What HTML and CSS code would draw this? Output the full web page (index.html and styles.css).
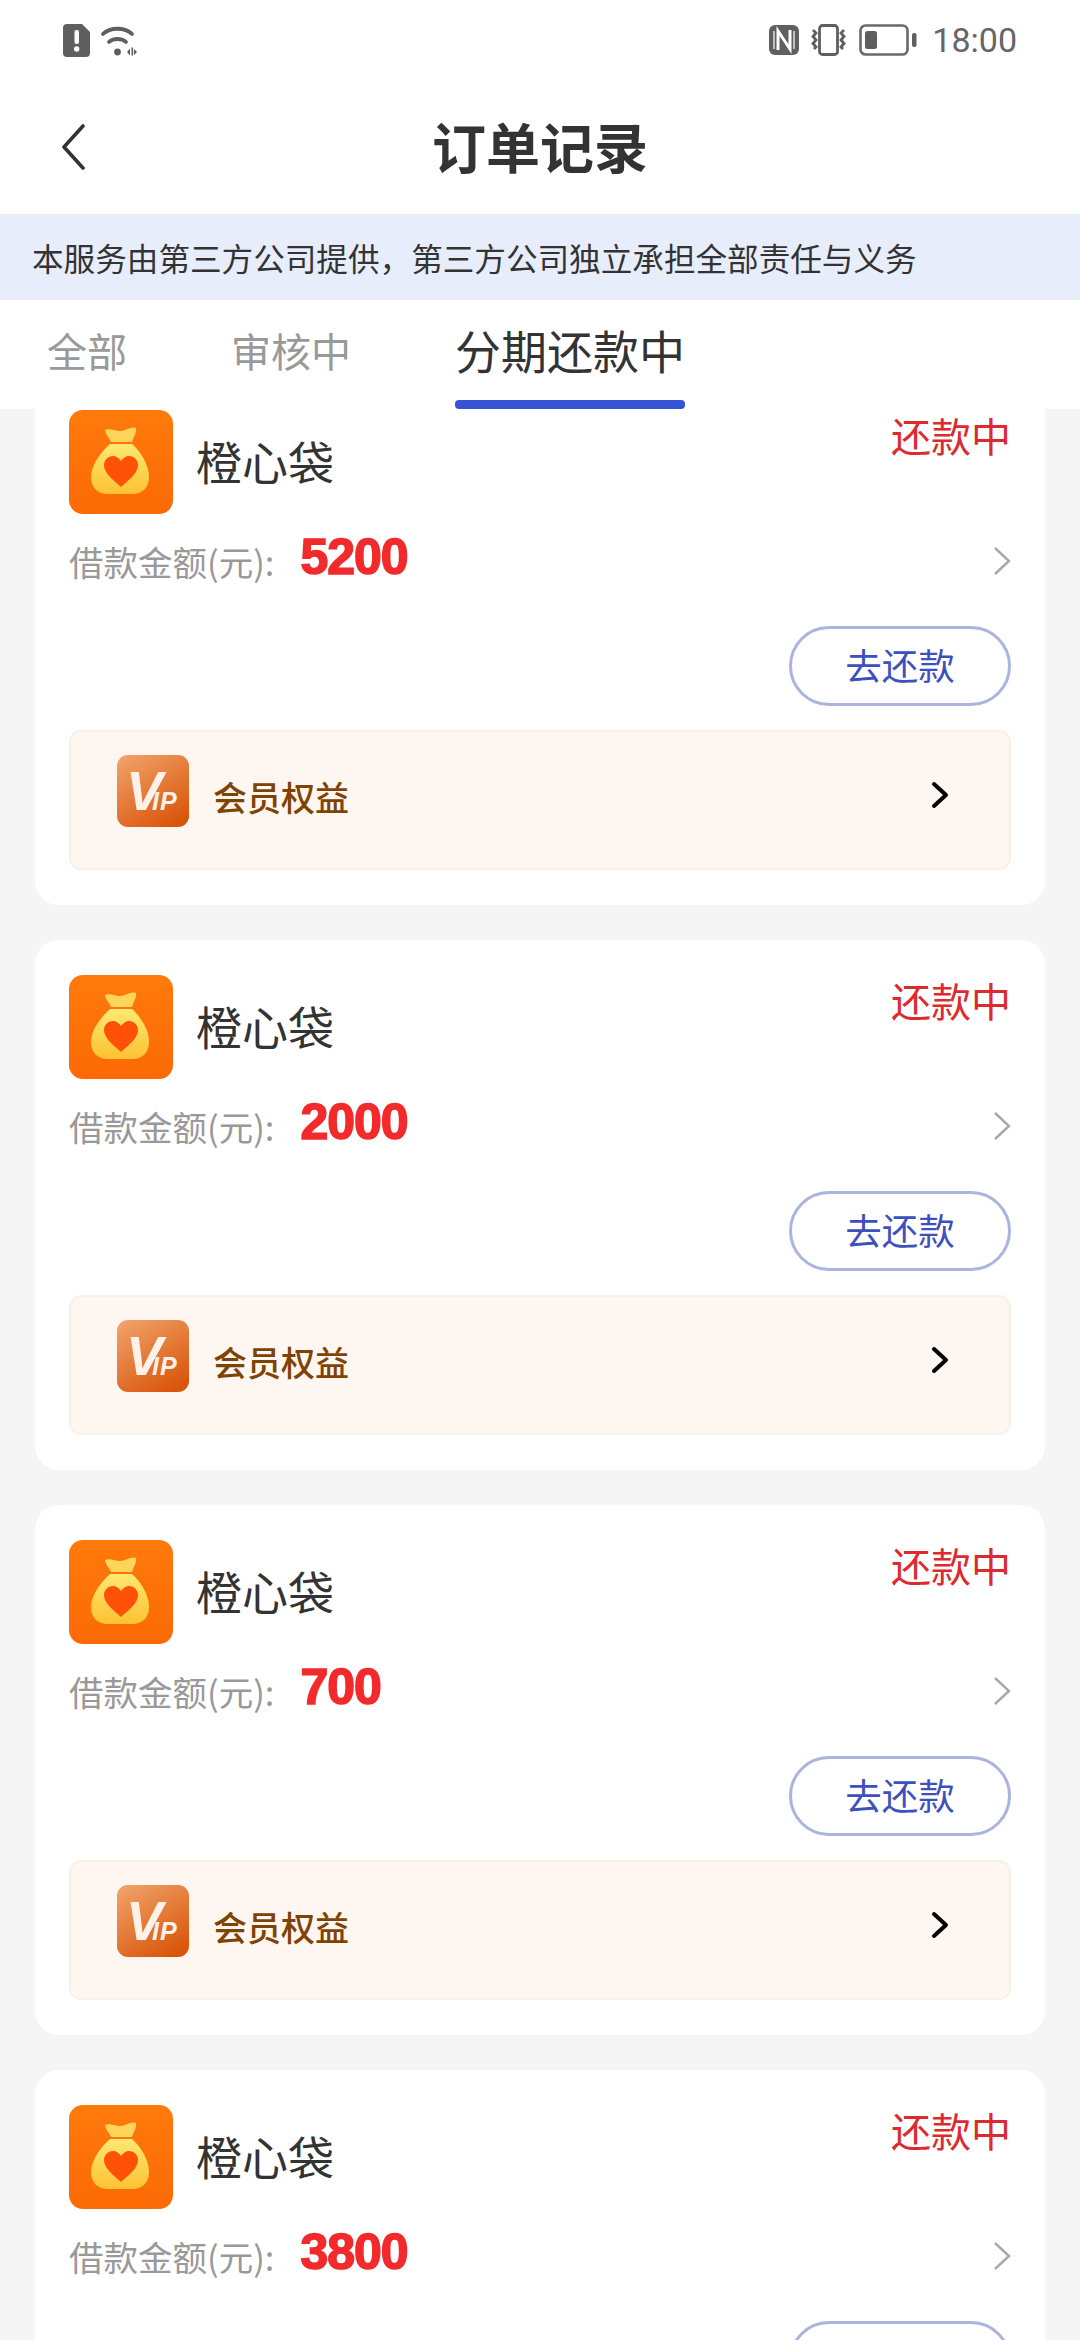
FILE: index.html
```html
<!DOCTYPE html>
<html lang="zh-CN">
<head>
<meta charset="utf-8">
<title>订单记录</title>
<link rel="stylesheet" href="styles.css">
</head>
<body>
<svg class="sprite" width="0" height="0" aria-hidden="true">
  <defs>
    <linearGradient id="bagBg" x1="0" y1="0" x2="0" y2="1"><stop offset="0" stop-color="#ff7a0b"/><stop offset="1" stop-color="#fc6a06"/></linearGradient>
    <linearGradient id="bagBody" x1="0" y1="0" x2="0" y2="1"><stop offset="0" stop-color="#ffe872"/><stop offset="1" stop-color="#fdc232"/></linearGradient>
    <linearGradient id="vipBg" x1="0.15" y1="0" x2="0.75" y2="1"><stop offset="0" stop-color="#f0a067"/><stop offset="1" stop-color="#d9550a"/></linearGradient>
    <symbol id="bag" viewBox="0 0 104 104">
      <rect width="104" height="104" rx="14" fill="url(#bagBg)"/>
      <path d="M36 20c5-2 9 1 15 1 6 0 11-5 16-3 1 4-2 8-4 14H42c-2-5-6-8-6-12z" fill="#fdd659"/>
      <path d="M41 34h22c9 8 17 21 17 33 0 11-7 17-17 17H39c-10 0-17-6-17-17 0-12 10-25 19-33z" fill="url(#bagBody)"/>
      <path d="M52 77C44 70 35 63 35 55c0-5 4-9 9-9 3 0 6 2 8 5 2-3 5-5 8-5 5 0 9 4 9 9 0 8-9 15-17 22z" fill="#ff5208"/>
    </symbol>
    <symbol id="vip" viewBox="0 0 72 72">
      <rect width="72" height="72" rx="11" fill="url(#vipBg)"/>
      <text class="vip-v" x="9" y="55">V</text>
      <text class="vip-ip" x="35" y="55">IP</text>
    </symbol>
  </defs>
</svg>
<div class="screen">
  <header class="top">
    <div class="status">
      <div class="status-group">
        <svg class="ico-alert" viewBox="0 0 27 33"><path d="M4 0h15l8 8v21a4 4 0 0 1-4 4H4a4 4 0 0 1-4-4V4a4 4 0 0 1 4-4z" fill="#5f5f5f"/><rect x="11.500" y="6" width="4.500" height="14" rx="2" fill="#fff"/><circle cx="13.700" cy="25" r="2.700" fill="#fff"/></svg>
        <svg class="ico-wifi" viewBox="0 0 37 31"><g fill="none" stroke="#5f5f5f" stroke-width="3.800" stroke-linecap="round"><path d="M3 9C10 2 25 2 32 9"/><path d="M9 17c4-4 13-4 17 0"/></g><circle cx="17.500" cy="27" r="3.400" fill="#5f5f5f"/><path d="M27 27l3-3.500v7zM31.500 22.500h1.600v8h-1.600zM34 24l3 3-3 3z" fill="#5f5f5f"/></svg>
      </div>
      <div class="status-group status-right">
        <svg class="ico-nfc" viewBox="0 0 30 30"><rect width="30" height="30" rx="6" fill="#5f5f5f"/><path d="M9 25V6l12 18V5" fill="none" stroke="#fff" stroke-width="3"/><path d="M5 6v18M25 6v18" stroke="#fff" stroke-width="1.200"/></svg>
        <svg class="ico-vib" viewBox="0 0 41 32"><rect x="11.500" y="1.500" width="18" height="29" rx="3" fill="none" stroke="#5f5f5f" stroke-width="2.800"/><g fill="none" stroke="#5f5f5f" stroke-width="2.800"><path d="M5 6l3 3-3 3.500 3 3.500-3 3.500 3 3.500-2 2"/><path d="M36 6l-3 3 3 3.500-3 3.500 3 3.500-3 3.500 2 2"/></g></svg>
        <svg class="ico-bat" viewBox="0 0 58 32"><rect x="1.500" y="1.500" width="47" height="29" rx="5" fill="none" stroke="#6a6a6a" stroke-width="2.600"/><rect x="6" y="7" width="12" height="18" rx="2.500" fill="#5f5f5f"/><rect x="53" y="9" width="4.500" height="14" rx="2" fill="#5f5f5f"/></svg>
        <span class="clock">18:00</span>
      </div>
    </div>
    <nav class="nav">
      <svg class="ico-back" viewBox="0 0 24 46"><path d="M22 2L3 23l19 21" fill="none" stroke="#333" stroke-width="3.600" stroke-linecap="round" stroke-linejoin="round"/></svg>
      <h1 class="title">订单记录</h1>
    </nav>
  </header>
  <div class="notice">本服务由第三方公司提供，第三方公司独立承担全部责任与义务</div>
  <div class="tabs">
    <span class="tab">全部</span>
    <span class="tab">审核中</span>
    <span class="tab tab-active">分期还款中</span>
  </div>
  <main class="list">
    <article class="card">
      <div class="card-head">
        <svg class="bag"><use href="#bag"/></svg>
        <span class="name">橙心袋</span>
        <span class="state">还款中</span>
      </div>
      <div class="amount-row">
        <span class="label">借款金额(元):</span>
        <span class="amount">5200</span>
        <svg class="chev-grey" viewBox="0 0 18 30"><path d="M2 2l14 13L2 28" fill="none" stroke="#a8a8a8" stroke-width="2.400"/></svg>
      </div>
      <div class="actions"><span class="pay">去还款</span></div>
      <div class="member">
        <svg class="vip"><use href="#vip"/></svg>
        <span class="member-text">会员权益</span>
        <svg class="chev-black" viewBox="0 0 18 28"><path d="M3 3l12 11L3 25" fill="none" stroke="#000" stroke-width="4" stroke-linecap="round" stroke-linejoin="round"/></svg>
      </div>
    </article>
    <article class="card">
      <div class="card-head">
        <svg class="bag"><use href="#bag"/></svg>
        <span class="name">橙心袋</span>
        <span class="state">还款中</span>
      </div>
      <div class="amount-row">
        <span class="label">借款金额(元):</span>
        <span class="amount">2000</span>
        <svg class="chev-grey" viewBox="0 0 18 30"><path d="M2 2l14 13L2 28" fill="none" stroke="#a8a8a8" stroke-width="2.400"/></svg>
      </div>
      <div class="actions"><span class="pay">去还款</span></div>
      <div class="member">
        <svg class="vip"><use href="#vip"/></svg>
        <span class="member-text">会员权益</span>
        <svg class="chev-black" viewBox="0 0 18 28"><path d="M3 3l12 11L3 25" fill="none" stroke="#000" stroke-width="4" stroke-linecap="round" stroke-linejoin="round"/></svg>
      </div>
    </article>
    <article class="card">
      <div class="card-head">
        <svg class="bag"><use href="#bag"/></svg>
        <span class="name">橙心袋</span>
        <span class="state">还款中</span>
      </div>
      <div class="amount-row">
        <span class="label">借款金额(元):</span>
        <span class="amount">700</span>
        <svg class="chev-grey" viewBox="0 0 18 30"><path d="M2 2l14 13L2 28" fill="none" stroke="#a8a8a8" stroke-width="2.400"/></svg>
      </div>
      <div class="actions"><span class="pay">去还款</span></div>
      <div class="member">
        <svg class="vip"><use href="#vip"/></svg>
        <span class="member-text">会员权益</span>
        <svg class="chev-black" viewBox="0 0 18 28"><path d="M3 3l12 11L3 25" fill="none" stroke="#000" stroke-width="4" stroke-linecap="round" stroke-linejoin="round"/></svg>
      </div>
    </article>
    <article class="card">
      <div class="card-head">
        <svg class="bag"><use href="#bag"/></svg>
        <span class="name">橙心袋</span>
        <span class="state">还款中</span>
      </div>
      <div class="amount-row">
        <span class="label">借款金额(元):</span>
        <span class="amount">3800</span>
        <svg class="chev-grey" viewBox="0 0 18 30"><path d="M2 2l14 13L2 28" fill="none" stroke="#a8a8a8" stroke-width="2.400"/></svg>
      </div>
      <div class="actions"><span class="pay"></span></div>
    </article>
  </main>
</div>
</body>
</html>
```
FILE: styles.css
```css
* { box-sizing: border-box; }
html, body { margin: 0; padding: 0; height: 2340px; overflow: hidden; background: #f5f5f5; }
body { font-family: "Noto Sans CJK SC", "Noto Sans", sans-serif; color: #333; }
.sprite { display: block; height: 0; width: 0; overflow: hidden; }
.vip-v { font-family: "Liberation Sans", sans-serif; font-weight: 700; font-style: italic; font-size: 55px; fill: #fdf1e8; }
.vip-ip { font-family: "Liberation Sans", sans-serif; font-weight: 700; font-style: italic; font-size: 25px; letter-spacing: 1px; fill: #fdf1e8; }

.screen { display: flex; flex-direction: column; height: 2340px; }
.top { background: #fff; height: 214px; flex: none; }
.status { height: 72px; padding: 16px 63px 0 63px; display: flex; justify-content: space-between; align-items: flex-start; }
.status-group { display: flex; align-items: center; gap: 10px; padding-top: 8px; }
.status-right { gap: 9px; }
.ico-alert { width: 27px; height: 33px; }
.ico-wifi { width: 37px; height: 31px; }
.ico-nfc { width: 30px; height: 30px; }
.ico-vib { width: 41px; height: 32px; }
.ico-bat { width: 58px; height: 32px; margin-left: 1px; margin-right: 6px; }
.clock { font-family: Roboto, sans-serif; font-size: 34px; line-height: 32px; color: #666; }

.nav { height: 142px; display: flex; align-items: center; justify-content: center; position: relative; padding-top: 6px; }
.ico-back { position: absolute; left: 61px; top: 52px; width: 24px; height: 46px; }
.title { margin: 0; font-size: 54px; font-weight: 700; line-height: 64px; color: #333; }

.notice { flex: none; height: 86px; background: #e8edfb; padding-left: 32px; font-size: 31.600px; line-height: 86px; color: #333; white-space: nowrap; }

.tabs { flex: none; height: 109px; background: #fff; display: flex; gap: 104px; padding-left: 47px; align-items: center; padding-bottom: 36px; padding-top: 26px; position: relative; z-index: 2; }
.tab { font-size: 40px; line-height: 48px; color: #999; }
.tab-active { font-size: 46px; color: #333; position: relative; margin-top: -2px; }
.tab-active::after { content: ""; position: absolute; left: 0; right: 0; top: 75px; height: 9px; border-radius: 4px; background: #3653d6; }

.list { flex: 1; overflow: hidden; display: flex; flex-direction: column; gap: 35px; padding: 0 35px; }
.card { flex: none; height: 530px; background: #fff; border-radius: 24px; padding: 35px 34px 34px; }
.card:first-child { margin-top: -34px; }

.card-head { display: flex; align-items: center; height: 104px; }
.bag { width: 104px; height: 104px; flex: none; }
.name { font-size: 46px; line-height: 60px; margin-left: 23px; padding-bottom: 4px; color: #333; }
.state { margin-left: auto; align-self: flex-start; font-size: 40px; line-height: 50px; color: #dc2a2e; }

.amount-row { display: flex; align-items: center; height: 48px; margin-top: 23px; }
.label { font-size: 34.500px; line-height: 48px; color: #999; }
.amount { font-family: "Liberation Sans", sans-serif; font-weight: 700; font-size: 50px; letter-spacing: -1px; line-height: 48px; color: #f22a2c; -webkit-text-stroke: 1.600px #f22a2c; margin-left: 26px; position: relative; top: -4px; }
.chev-grey { margin-left: auto; width: 18px; height: 30px; }

.actions { display: flex; justify-content: flex-end; margin-top: 41px; }
.pay { width: 222px; height: 80px; border: 3px solid #aab4de; border-radius: 40px; display: flex; align-items: center; justify-content: center; font-size: 36.500px; color: #3d50bd; padding-bottom: 4px; }

.member { display: flex; align-items: center; height: 140px; margin-top: 24px; background: #fdf6f1; border: 2px solid #f9f0e6; border-radius: 12px; padding: 0 60px 0 46px; }
.vip { width: 72px; height: 72px; flex: none; margin-bottom: 18px; }
.member-text { margin-left: 24px; margin-bottom: 7px; font-size: 34px; font-weight: 500; line-height: 48px; color: #7f4304; }
.chev-black { margin-left: auto; width: 18px; height: 28px; margin-bottom: 11px; }
```
